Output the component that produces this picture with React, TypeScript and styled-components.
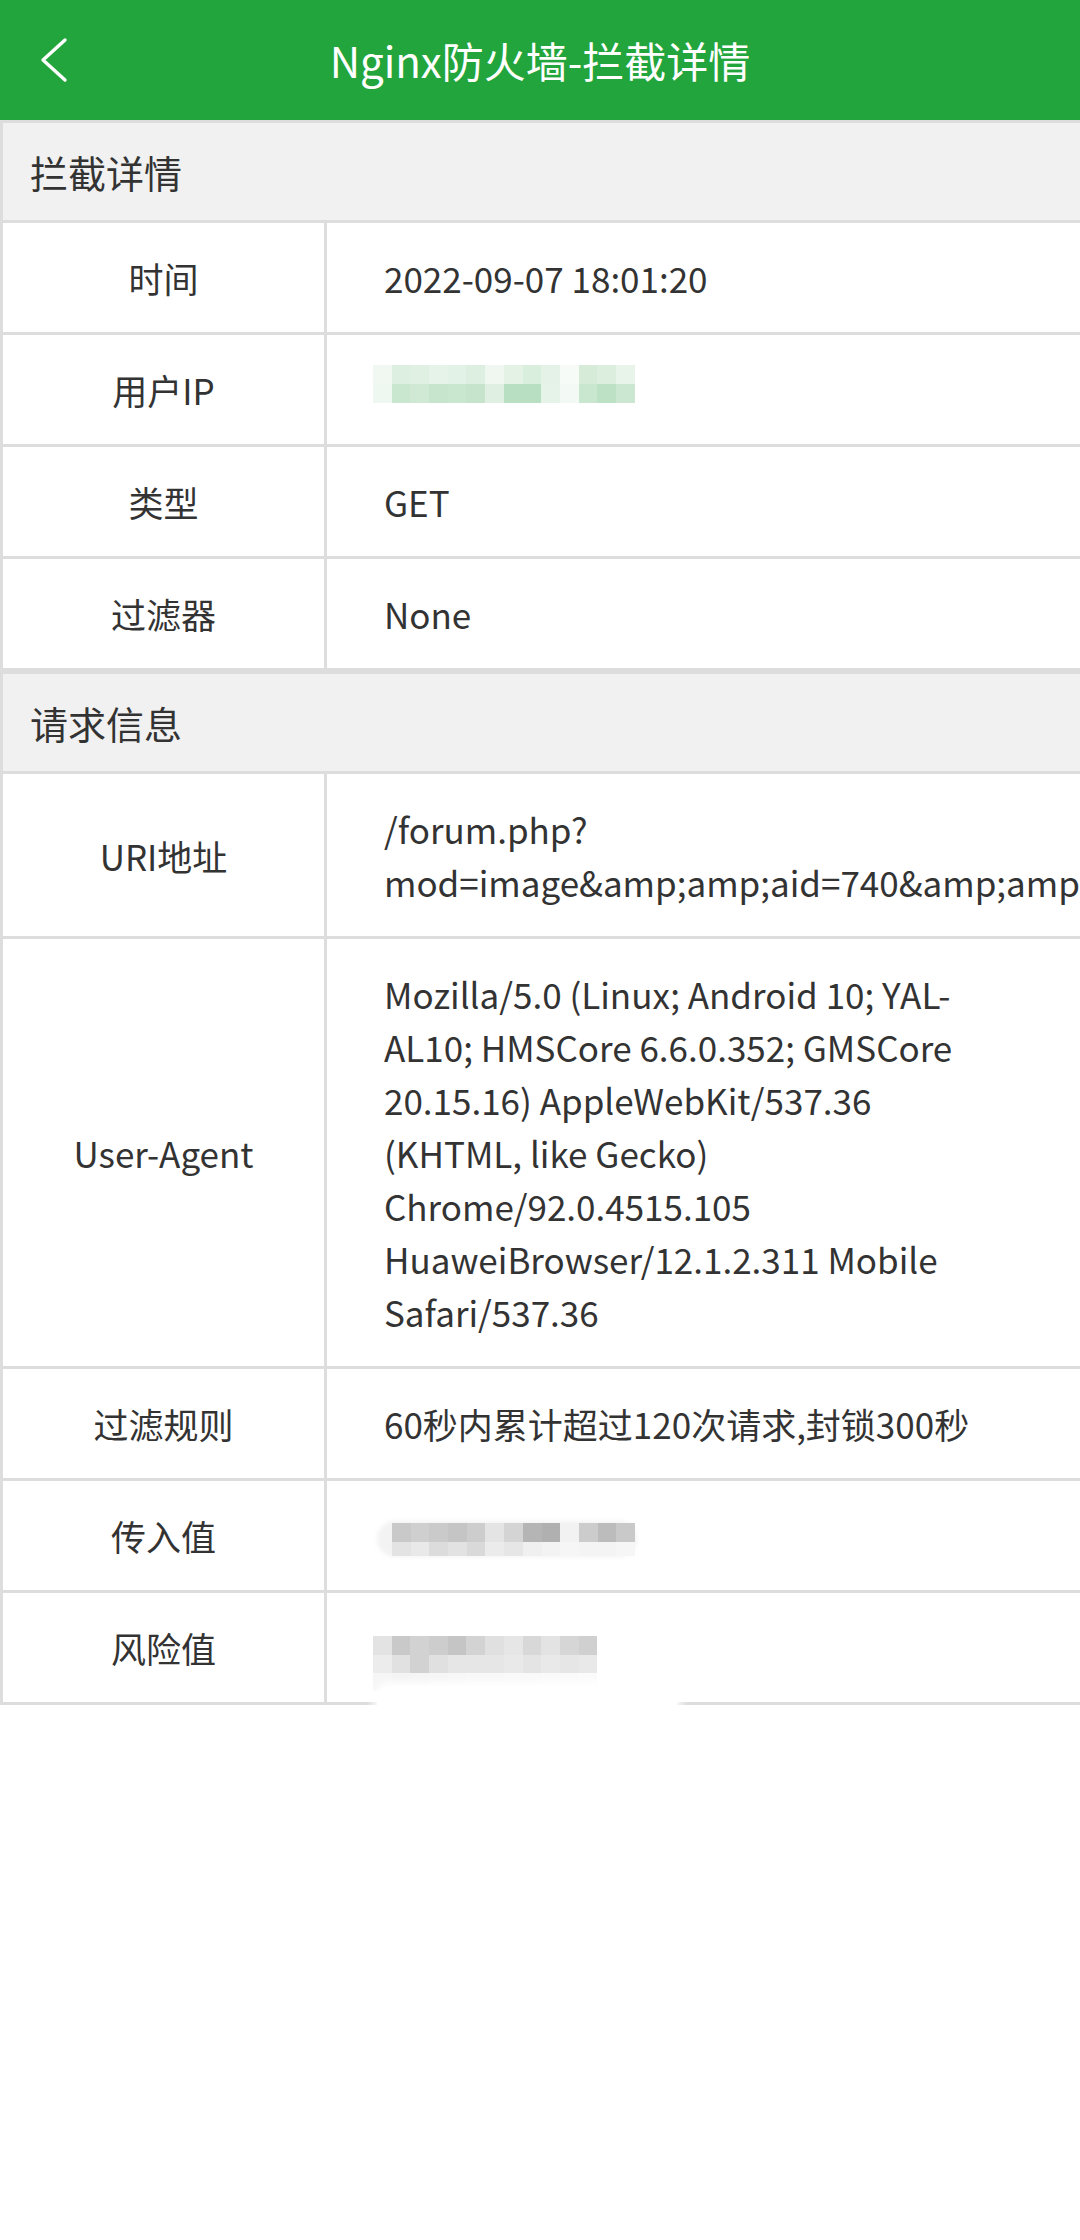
import React from "react";
import styled, { createGlobalStyle } from "styled-components";

const GlobalStyle = createGlobalStyle`
  html, body { margin: 0; padding: 0; background: #ffffff; }
  body {
    font-family: "Noto Sans CJK SC", "Noto Sans", sans-serif;
    color: #333333;
    overflow-x: hidden;
  }
  * { box-sizing: border-box; }
`;

const Page = styled.div`
  width: 1080px;
  min-height: 2240px;
  overflow: hidden;
  background: #ffffff;
`;

const TopBar = styled.header`
  height: 120px;
  background: #22a53c;
  display: grid;
  grid-template-columns: 140px 1fr 140px;
  align-items: center;
`;

const BackButton = styled.button`
  border: 0;
  background: transparent;
  padding: 0 0 0 40px;
  height: 120px;
  display: flex;
  align-items: center;
  cursor: pointer;
`;

const Title = styled.h1`
  margin: 0;
  text-align: center;
  color: #ffffff;
  font-size: 42px;
  font-weight: 400;
  line-height: 120px;
  letter-spacing: 0;
`;

const Block = styled.section`
  width: 1140px;
  border: 3px solid #dddddd;
`;

const SectionTitle = styled.div`
  height: 97px;
  background: #f1f1f1;
  padding-left: 27px;
  display: flex;
  align-items: center;
  font-size: 38px;
  color: #333333;
`;

const Row = styled.div`
  display: grid;
  grid-template-columns: 321px 1fr;
  border-top: 3px solid #dddddd;
`;

const Label = styled.div`
  display: flex;
  align-items: center;
  justify-content: center;
  text-align: center;
  padding: 28px 8px;
  font-size: 35px;
  line-height: 53px;
  color: #333333;
`;

const Value = styled.div`
  position: relative;
  border-left: 3px solid #dddddd;
  padding: 28px 0 28px 57px;
  font-size: 35px;
  line-height: 53px;
  color: #333333;
`;

const ValueText = styled.div`
  max-width: 614px;
`;

const Line = styled.span<{ $nowrap?: boolean }>`
  display: block;
  white-space: ${(p) => (p.$nowrap ? "nowrap" : "normal")};
`;

const MaskLine = styled.div`
  height: 53px;
  position: relative;
`;

const Mosaic = styled.div<{ $x: number; $y: number; $cell: number }>`
  position: absolute;
  left: ${(p) => p.$x}px;
  top: ${(p) => p.$y}px;
  display: grid;
  grid-auto-flow: column;
  grid-auto-columns: ${(p) => p.$cell}px;
`;

const MosaicCol = styled.div`
  display: flex;
  flex-direction: column;
`;

const MosaicCell = styled.div<{ $h: number }>`
  height: ${(p) => p.$h}px;
`;

const Pill = styled.div<{ $x: number; $y: number; $w: number; $h: number; $bg: string }>`
  position: absolute;
  left: ${(p) => p.$x}px;
  top: ${(p) => p.$y}px;
  width: ${(p) => p.$w}px;
  height: ${(p) => p.$h}px;
  background: ${(p) => p.$bg};
  border-radius: ${(p) => p.$h / 2}px;
  filter: blur(2px);
`;

const Smear = styled.div`
  position: absolute;
  left: 50px;
  bottom: -14px;
  width: 300px;
  height: 30px;
  background: #ffffff;
  border-radius: 14px;
  box-shadow: 0 0 8px 4px #ffffff;
`;

const ip = {
  rows: [19, 19],
  cols: [
    ["#f1f8f2", "#eef7f0"],
    ["#dcefe0", "#c9e6cf"],
    ["#e0f0e3", "#d0e9d5"],
    ["#e6f3e8", "#c7e5cd"],
    ["#e3f2e6", "#c9e6ce"],
    ["#dcefe0", "#c6e4cc"],
    ["#eff7f0", "#dff0e2"],
    ["#e4f2e6", "#b8dfc1"],
    ["#d9eedd", "#b8dfc1"],
    ["#e4f2e7", "#e5f3e8"],
    ["#f7fbf7", "#f3f9f4"],
    ["#d6ecd9", "#c9e6ce"],
    ["#dcefdf", "#bde1c5"],
    ["#e8f4ea", "#cce7d1"],
  ],
};

const incoming = {
  rows: [19, 14],
  cols: [
    ["#c9c9c9", "#e3e3e3"],
    ["#cfcfcf", "#e9e9e9"],
    ["#cacaca", "#dcdcdc"],
    ["#c5c5c5", "#e2e2e2"],
    ["#cdcdcd", "#d9d9d9"],
    ["#e4e4e4", "#ebebeb"],
    ["#d4d4d4", "#e6e6e6"],
    ["#b5b5b5", "#f0f0f0"],
    ["#b0b0b0", "#f3f3f3"],
    ["#f2f2f2", "#f6f6f6"],
    ["#cccccc", "#f4f4f4"],
    ["#bcbcbc", "#f4f4f4"],
    ["#c9c9c9", "#f6f6f6"],
  ],
};

const risk = {
  rows: [19, 18, 18],
  cols: [
    ["#e3e3e3", "#ececec", "#f6f6f6"],
    ["#c9c9c9", "#e1e1e1", "#f4f4f4"],
    ["#d2d2d2", "#d2d2d2", "#f5f5f5"],
    ["#cdcdcd", "#e0e0e0", "#f6f6f6"],
    ["#c5c5c5", "#e6e6e6", "#f7f7f7"],
    ["#d3d3d3", "#e6e6e6", "#f8f8f8"],
    ["#e0e0e0", "#e6e6e6", "#f8f8f8"],
    ["#e6e6e6", "#e9e9e9", "#f9f9f9"],
    ["#d8d8d8", "#e4e4e4", "#f9f9f9"],
    ["#e3e3e3", "#e9e9e9", "#fafafa"],
    ["#d6d6d6", "#e6e6e6", "#fafafa"],
    ["#d0d0d0", "#e9e9e9", "#fbfbfb"],
  ],
};

type MosaicData = { rows: number[]; cols: string[][] };

function Pixelated({ data, x, y }: { data: MosaicData; x: number; y: number }) {
  return (
    <Mosaic $x={x} $y={y} $cell={18.7}>
      {data.cols.map((col, i) => (
        <MosaicCol key={i}>
          {col.map((c, j) => (
            <MosaicCell key={j} $h={data.rows[j]} style={{ background: c }} />
          ))}
        </MosaicCol>
      ))}
    </Mosaic>
  );
}

function BackIcon() {
  return (
    <svg width="28" height="46" viewBox="0 0 28 46" fill="none">
      <polyline
        points="25,3 3,23 25,43"
        stroke="#ffffff"
        strokeWidth="3.4"
        strokeLinecap="round"
        strokeLinejoin="round"
      />
    </svg>
  );
}

const uriQuery = "mod=image&amp;amp;aid=740&amp;amp;size=300x300&amp;amp;key=8c1f";

export default function App() {
  return (
    <Page>
      <GlobalStyle />
      <TopBar>
        <BackButton aria-label="返回">
          <BackIcon />
        </BackButton>
        <Title>Nginx防火墙-拦截详情</Title>
        <div />
      </TopBar>

      <Block>
        <SectionTitle>拦截详情</SectionTitle>
        <Row>
          <Label>时间</Label>
          <Value>
            <ValueText>2022-09-07 18:01:20</ValueText>
          </Value>
        </Row>
        <Row>
          <Label>用户IP</Label>
          <Value>
            <MaskLine>
              <Pixelated data={ip} x={-11} y={2} />
            </MaskLine>
          </Value>
        </Row>
        <Row>
          <Label>类型</Label>
          <Value>
            <ValueText>GET</ValueText>
          </Value>
        </Row>
        <Row>
          <Label>过滤器</Label>
          <Value>
            <ValueText>None</ValueText>
          </Value>
        </Row>
      </Block>

      <Block>
        <SectionTitle>请求信息</SectionTitle>
        <Row>
          <Label>URI地址</Label>
          <Value>
            <ValueText>
              <Line>/forum.php?</Line>
              <Line $nowrap>{uriQuery}</Line>
            </ValueText>
          </Value>
        </Row>
        <Row>
          <Label>User-Agent</Label>
          <Value>
            <ValueText>
              Mozilla/5.0 (Linux; Android 10; YAL-AL10; HMSCore 6.6.0.352; GMSCore
              20.15.16) AppleWebKit/537.36 (KHTML, like Gecko) Chrome/92.0.4515.105
              HuaweiBrowser/12.1.2.311 Mobile Safari/537.36
            </ValueText>
          </Value>
        </Row>
        <Row>
          <Label>过滤规则</Label>
          <Value>
            <ValueText>60秒内累计超过120次请求,封锁300秒</ValueText>
          </Value>
        </Row>
        <Row>
          <Label>传入值</Label>
          <Value>
            <MaskLine>
              <Pill $x={-7} $y={12} $w={260} $h={36} $bg="#f3f3f3" />
              <Pixelated data={incoming} x={8} y={14} />
            </MaskLine>
          </Value>
        </Row>
        <Row>
          <Label>风险值</Label>
          <Value>
            <MaskLine>
              <Pixelated data={risk} x={-11} y={15} />
            </MaskLine>
            <Smear />
          </Value>
        </Row>
      </Block>
    </Page>
  );
}
